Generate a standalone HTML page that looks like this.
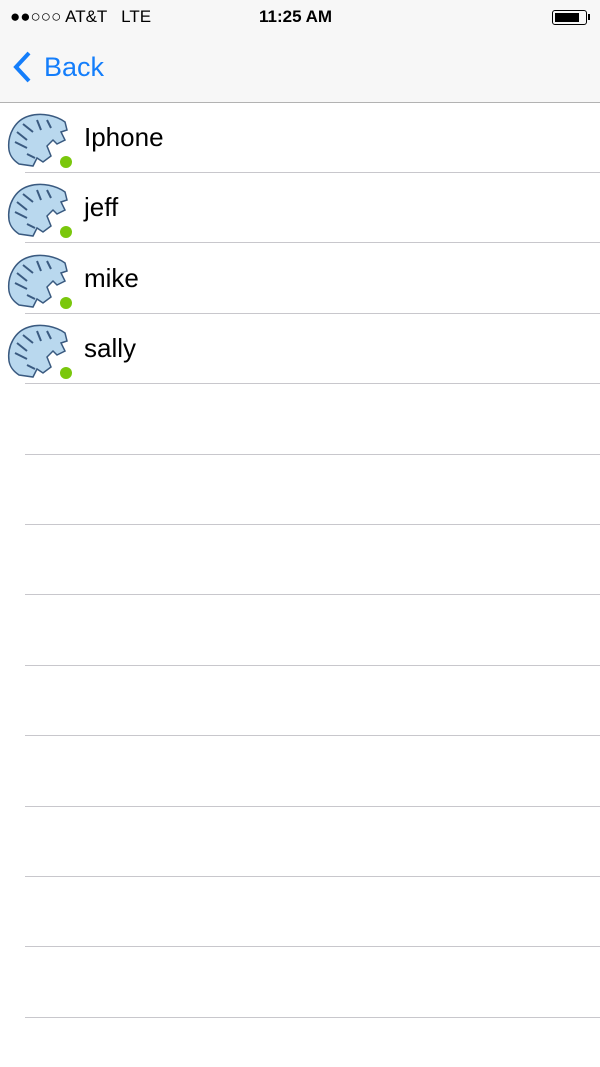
<!DOCTYPE html>
<html><head><meta charset="utf-8"><style>
body{margin:0;width:600px;height:1067px;background:#fff;font-family:"Liberation Sans",sans-serif;position:relative;overflow:hidden}
.hdr{position:absolute;left:0;top:0;width:600px;height:102px;background:#f7f7f7;border-bottom:1px solid #b2b2b2}
.sb{position:absolute;top:7px;font-size:17px;color:#000}
.back{position:absolute;left:44px;top:52px;font-size:27px;color:#147efb}
.sep{position:absolute;left:25px;right:0;height:1px;background:#c8c7cc}
.row{position:absolute;left:0;width:600px;height:70px}
.name{position:absolute;left:84px;top:20px;font-size:26px;color:#000}
.av{position:absolute;left:7px;top:8px;overflow:visible}
</style></head><body>
<div class="hdr">
<div class="sb" style="left:10px">●●○○○ AT&amp;T &nbsp; LTE</div>
<div class="sb" style="left:259px;font-weight:bold">11:25 AM</div>
<div style="position:absolute;left:552px;top:10px;width:33px;height:13px;border:1px solid #000;border-radius:3px"><div style="margin:2px;width:24px;height:9px;background:#000"></div></div>
<div style="position:absolute;left:588px;top:14px;width:2px;height:6px;background:#000"></div>
<svg style="position:absolute;left:12px;top:50px" width="22" height="34"><path d="M17 3 L4 17 L17 31" stroke="#147efb" stroke-width="4" fill="none"/></svg>
<div class="back">Back</div>
</div>
<div id="rows"></div>
<script>
var r=document.getElementById('rows'),names=['Iphone','jeff','mike','sally'],h='';
for(var i=0;i<13;i++){var y=102+i*70.4;
if(i<4)h+='<div class="row" style="top:'+y+'px"><svg class="av" width="70" height="64" viewBox="0 0 70 64"><path d="M2 40 C0 25 8 10 22 6 C35 2 50 6 58 12 L60 20 L54 22 L58 30 L50 34 L46 30 L40 36 L44 46 L36 52 L30 48 L26 56 L12 54 C6 50 3 46 2 40Z" fill="#b9d8ee" stroke="#3a5a80" stroke-width="1.5"/><path d="M10 22 L20 30 M8 32 L20 38 M16 14 L26 22 M30 10 L34 20 M40 10 L44 18 M20 44 L28 48" stroke="#3a5a80" stroke-width="2"/><circle cx="59" cy="52" r="6" fill="#7ac70c"/></svg><div class="name">'+names[i]+'</div></div>';
h+='<div class="sep" style="top:'+(y+70)+'px"></div>';}
r.innerHTML=h;
</script>
</body></html>
